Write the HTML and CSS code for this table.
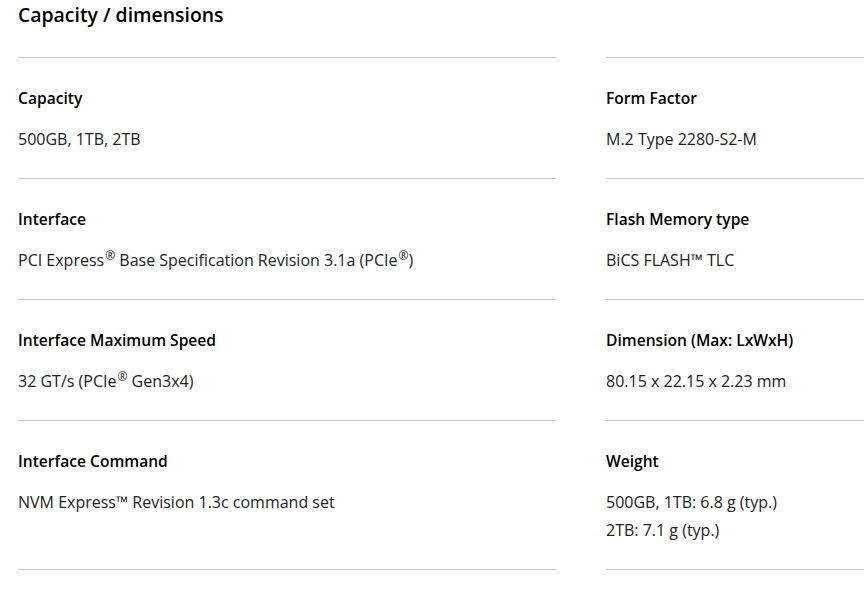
FILE: index.html
```html
<!DOCTYPE html>
<html lang="en">
<head>
<meta charset="utf-8">
<title>Capacity / dimensions</title>
<link rel="stylesheet" href="styles.css">
</head>
<body>
<section class="specs">
  <h2 class="specs-title">Capacity / dimensions</h2>
  <div class="specs-grid">
    <div class="spec">
      <div class="spec-label">Capacity</div>
      <div class="spec-value">500GB, 1TB, 2TB</div>
    </div>
    <div class="spec">
      <div class="spec-label">Form Factor</div>
      <div class="spec-value">M.2 Type 2280-S2-M</div>
    </div>
    <div class="spec">
      <div class="spec-label">Interface</div>
      <div class="spec-value">PCI Express<sup>®</sup> Base Specification Revision 3.1a (PCIe<sup>®</sup>)</div>
    </div>
    <div class="spec">
      <div class="spec-label">Flash Memory type</div>
      <div class="spec-value">BiCS FLASH™ TLC</div>
    </div>
    <div class="spec">
      <div class="spec-label">Interface Maximum Speed</div>
      <div class="spec-value">32 GT/s (PCIe<sup>®</sup> Gen3x4)</div>
    </div>
    <div class="spec">
      <div class="spec-label">Dimension (Max: LxWxH)</div>
      <div class="spec-value">80.15 x 22.15 x 2.23 mm</div>
    </div>
    <div class="spec spec-last">
      <div class="spec-label">Interface Command</div>
      <div class="spec-value">NVM Express™ Revision 1.3c command set</div>
    </div>
    <div class="spec spec-last">
      <div class="spec-label">Weight</div>
      <div class="spec-value">500GB, 1TB: 6.8 g (typ.)<br>2TB: 7.1 g (typ.)</div>
    </div>
  </div>
</section>
</body>
</html>
```

FILE: styles.css
```css
html, body {
  margin: 0;
  padding: 0;
  background: #fff;
  overflow: hidden;
}

body {
  font-family: "Open Sans", "Noto Sans", sans-serif;
  color: #1a1a1a;
}

.specs {
  padding: 0 0 0 18px;
  width: 1200px;
}

.specs-title {
  margin: 0;
  font-size: 19.4px;
  font-weight: 600;
  line-height: 30px;
  color: #000;
  height: 57px;
}

.specs-grid {
  display: grid;
  grid-template-columns: 538px 538px;
  column-gap: 50px;
}

.spec {
  border-top: 1px solid #c8c8c8;
  padding: 28px 0 25px;
}

.spec-last {
  border-bottom: 1px solid #c8c8c8;
}

.spec-label {
  font-size: 15.6px;
  font-weight: 600;
  line-height: 24px;
  color: #000;
  margin-bottom: 15px;
}

.spec-value {
  font-size: 16px;
  line-height: 28px;
  color: #222;
}

.spec-value sup {
  font-size: 12px;
  line-height: 0;
  vertical-align: 6px;
  margin-left: 1px;
}
```
